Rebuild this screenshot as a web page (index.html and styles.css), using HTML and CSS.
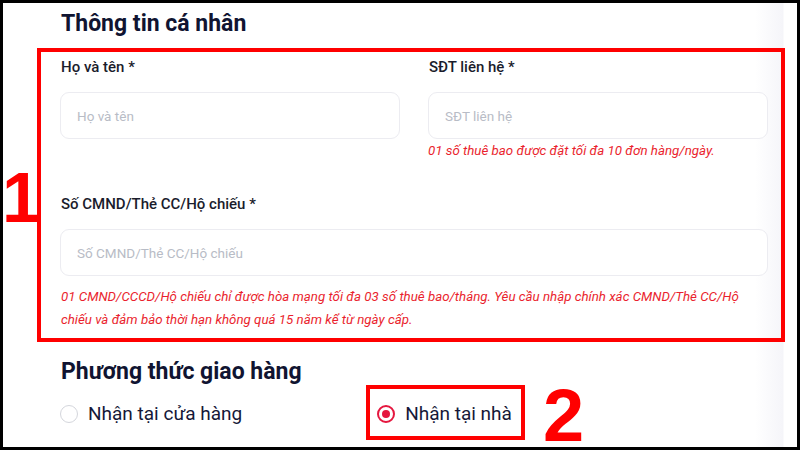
FILE: index.html
```html
<!DOCTYPE html>
<html lang="vi">
<head>
<meta charset="utf-8">
<title>Thông tin cá nhân</title>
<link rel="stylesheet" href="styles.css">
</head>
<body>
<div class="frame">
  <span class="mark mark-1">1</span>
  <h2 class="title">Thông tin cá nhân</h2>
  <div class="box">
    <div class="grid">
      <div class="field">
        <label class="label">Họ và tên *</label>
        <input class="input" type="text" placeholder="Họ và tên">
      </div>
      <div class="field">
        <label class="label">SĐT liên hệ *</label>
        <input class="input" type="text" placeholder="SĐT liên hệ">
        <p class="hint">01 số thuê bao được đặt tối đa 10 đơn hàng/ngày.</p>
      </div>
    </div>
    <div class="field field-wide">
      <label class="label">Số CMND/Thẻ CC/Hộ chiếu *</label>
      <input class="input" type="text" placeholder="Số CMND/Thẻ CC/Hộ chiếu">
      <p class="hint hint-long">01 CMND/CCCD/Hộ chiếu chỉ được hòa mạng tối đa 03 số thuê bao/tháng. Yêu cầu nhập chính xác CMND/Thẻ CC/Hộ chiếu và đảm bảo thời hạn không quá 15 năm kể từ ngày cấp.</p>
    </div>
  </div>
  <h2 class="title title-2">Phương thức giao hàng</h2>
  <div class="radios">
    <div class="option">
      <span class="radio"></span>
      <span class="option-text">Nhận tại cửa hàng</span>
    </div>
    <div class="option option-marked">
      <span class="radio radio-on"></span>
      <span class="option-text">Nhận tại nhà</span>
    </div>
    <span class="mark mark-2">2</span>
  </div>
</div>
</body>
</html>
```

FILE: styles.css
```css
* { box-sizing: border-box; }
html, body { margin: 0; padding: 0; }
body {
  width: 800px;
  height: 450px;
  overflow: hidden;
  font-family: Roboto, "Noto Sans", sans-serif;
}
.frame {
  position: relative;
  width: 800px;
  height: 450px;
  border: 3px solid #000;
  padding: 0 12px 0 34px;
  background: linear-gradient(to right, #fff 0, #fff 752px, #f5f5f9 780px, #fff 781px, #fff 100%);
  overflow: hidden;
}
.mark {
  font-family: "Liberation Sans", Arial, sans-serif;
  font-weight: 700;
  color: #ff0000;
}
.mark-1 {
  position: absolute;
  left: -1px;
  top: 160px;
  font-size: 70px;
  line-height: 70px;
}
.title {
  margin: 7px 0 0 24px;
  font-size: 23px;
  line-height: 28px;
  font-weight: 700;
  color: #101431;
}
.box {
  margin-top: 10px;
  border: 4px solid #ff0000;
  padding: 5px 13px 7px 19px;
}
.grid {
  display: grid;
  grid-template-columns: 340px 340px;
  column-gap: 28px;
  align-items: start;
}
.field { display: flex; flex-direction: column; }
.field-wide { margin-top: 34px; }
.label {
  display: block;
  padding-left: 1px;
  font-size: 15px;
  line-height: 20px;
  font-weight: 500;
  color: #1a1c2c;
}
.input {
  margin-top: 15px;
  height: 47px;
  width: 100%;
  border: 1px solid #ececf1;
  border-radius: 9px;
  padding: 0 16px;
  font-family: Roboto, "Noto Sans", sans-serif;
  font-size: 13.5px;
  color: #1a1c2c;
  background: #fff;
  outline: none;
}
.input::placeholder { color: #b8bcc6; }
.hint {
  margin: 2px 0 0 0;
  font-size: 13.3px;
  line-height: 19px;
  font-style: italic;
  color: #ea1f2e;
}
.hint-long {
  margin-top: 9px;
  line-height: 23px;
  padding-left: 1px;
}
.title-2 {
  margin-top: 17px;
  line-height: 26px;
}
.radios {
  display: flex;
  align-items: flex-start;
  margin-left: 12px;
}
.option {
  display: flex;
  align-items: center;
  gap: 10px;
  height: 55px;
  border: 4px solid transparent;
  padding: 2px 9px 0 7px;
}
.option-marked {
  margin-left: 111px;
  border-color: #ff0000;
}
.radio {
  width: 18px;
  height: 18px;
  border-radius: 50%;
  border: 1.5px solid #d4d6dc;
  background: #fff;
  display: flex;
  align-items: center;
  justify-content: center;
  flex: none;
}
.radio-on { border: 2px solid #e5173f; }
.radio-on::after {
  content: "";
  width: 8px;
  height: 8px;
  border-radius: 50%;
  background: #e5173f;
}
.option-text {
  font-size: 19px;
  line-height: 22px;
  color: #151838;
}
.mark-2 {
  margin: 0 0 0 18px;
  font-size: 74px;
  line-height: 62px;
}
```
